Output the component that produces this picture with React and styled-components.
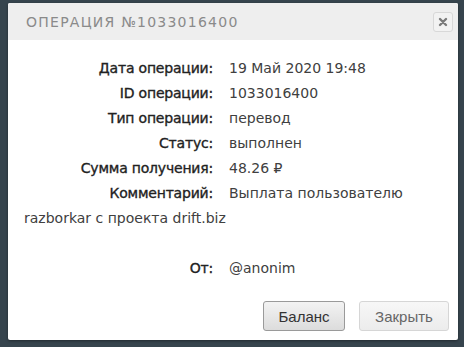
import React from "react";
import styled, { createGlobalStyle } from "styled-components";

const Global = createGlobalStyle`
  html, body { margin: 0; padding: 0; background: #36444d; }
  body { font-family: "DejaVu Sans", "Noto Sans", sans-serif; }
`;

const Page = styled.div`
  width: 464px;
  height: 347px;
  padding: 3px 6px 0 8px;
  box-sizing: border-box;
`;

const Dialog = styled.div`
  width: 450px;
  height: 337px;
  background: #fff;
  border-radius: 2px;
  box-shadow: 0 1px 3px rgba(0, 0, 0, 0.4);
  display: flex;
  flex-direction: column;
  overflow: hidden;
`;

const Header = styled.div`
  height: 37px;
  background: #eeeeee;
  display: flex;
  align-items: center;
  justify-content: space-between;
  padding: 0 5px 0 18px;
`;

const Title = styled.div`
  font-family: "DejaVu Sans", sans-serif;
  font-size: 14px;
  letter-spacing: 1.25px;
  color: #8a8a8a;
  text-transform: uppercase;
`;

const CloseBtn = styled.button`
  width: 20px;
  height: 20px;
  padding: 0;
  border: 1px solid #d8d8d8;
  border-radius: 3px;
  background: #f2f2f2;
  display: flex;
  align-items: center;
  justify-content: center;
`;

const Body = styled.div`
  padding: 16px 16px 0 16px;
  font-size: 14px;
  line-height: 25px;
  color: #333;
  flex: 1;
`;

const Row = styled.div`
  min-height: 25px;
`;

const Label = styled.span`
  display: inline-block;
  width: 189px;
  text-align: right;
  margin-right: 16px;
  color: #222;
  letter-spacing: -0.2px;
  -webkit-text-stroke: 0.35px #222;
`;

const Value = styled.span`
  color: #404040;
`;

const Footer = styled.div`
  display: flex;
  justify-content: flex-end;
  gap: 14px;
  padding: 0 9px 9px 0;
`;

const Button = styled.button`
  height: 30px;
  width: ${(p) => p.$w}px;
  border-radius: 3px;
  font-family: "Liberation Sans", Arial, sans-serif;
  font-size: 15px;
  border: 1px solid ${(p) => (p.$primary ? "#9a9a9a" : "#d6d6d6")};
  color: ${(p) => (p.$primary ? "#333" : "#666")};
  background: ${(p) =>
    p.$primary
      ? "linear-gradient(#f3f3f3, #dcdcdc)"
      : "linear-gradient(#f7f7f7, #ececec)"};
`;

const rows = [
  ["Дата операции:", "19 Май 2020 19:48"],
  ["ID операции:", "1033016400"],
  ["Тип операции:", "перевод"],
  ["Статус:", "выполнен"],
  ["Сумма получения:", "48.26 ₽"],
  ["Комментарий:", "Выплата пользователю razborkar с проекта drift.biz"],
];

export default function App() {
  return (
    <>
      <Global />
      <Page>
        <Dialog>
          <Header>
            <Title>Операция №1033016400</Title>
            <CloseBtn aria-label="close">
              <svg width="10" height="10" viewBox="0 0 10 10">
                <path d="M2 2 L8 8 M8 2 L2 8" stroke="#7a7a7a" strokeWidth="2.4" strokeLinecap="round" />
              </svg>
            </CloseBtn>
          </Header>
          <Body>
            {rows.map(([l, v]) => (
              <Row key={l}>
                <Label>{l}</Label>
                <Value>{v}</Value>
              </Row>
            ))}
            <Row />
            <Row>
              <Label>От:</Label>
              <Value>@anonim</Value>
            </Row>
          </Body>
          <Footer>
            <Button $primary $w={82}>Баланс</Button>
            <Button $w={90}>Закрыть</Button>
          </Footer>
        </Dialog>
      </Page>
    </>
  );
}
